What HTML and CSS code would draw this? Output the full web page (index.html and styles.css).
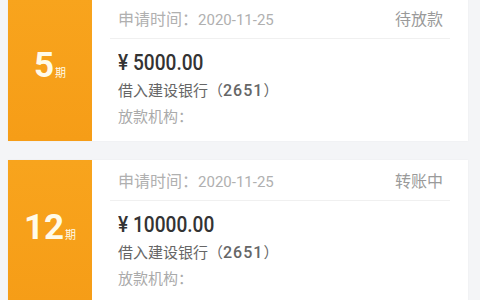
FILE: index.html
```html
<!DOCTYPE html>
<html lang="zh">
<head>
<meta charset="utf-8">
<link rel="stylesheet" href="styles.css">
</head>
<body>
<div class="list">
  <div class="card">
    <div class="term"><span class="num">5</span><span class="unit">期</span></div>
    <div class="info">
      <div class="head"><span class="date">申请时间：<span class="d">2020-11-25</span></span><span class="status">待放款</span></div>
      <div class="amount"><span class="amt">¥ 5000.00</span></div>
      <div class="bank">借入建设银行（<span class="bd">2651</span>）</div>
      <div class="org">放款机构：</div>
    </div>
  </div>
  <div class="card">
    <div class="term"><span class="num">12</span><span class="unit">期</span></div>
    <div class="info">
      <div class="head"><span class="date">申请时间：<span class="d">2020-11-25</span></span><span class="status">转账中</span></div>
      <div class="amount"><span class="amt">¥ 10000.00</span></div>
      <div class="bank">借入建设银行（<span class="bd">2651</span>）</div>
      <div class="org">放款机构：</div>
    </div>
  </div>
</div>
</body>
</html>
```
FILE: styles.css
```css
* { box-sizing: border-box; }
html, body { margin: 0; padding: 0; }
body {
  width: 480px;
  height: 300px;
  overflow: hidden;
  background: #f4f5f7;
  font-family: "Noto Sans CJK SC", "Noto Sans", sans-serif;
}
.list {
  display: flex;
  flex-direction: column;
  gap: 19px;
  padding: 0 12px 0 8px;
  margin-top: -2px;
}
.card {
  display: flex;
  height: 143px;
  background: #fff;
  box-shadow: 0 0 2px rgba(0,0,0,0.04);
  flex: none;
}
.term {
  width: 84px;
  flex: none;
  background: linear-gradient(#f8a41d, #f69d17);
  display: flex;
  align-items: baseline;
  justify-content: center;
  padding-top: 48px;
  color: #fffbe9;
}
.num {
  font-family: Roboto, "Liberation Sans", sans-serif;
  font-weight: 700;
  font-size: 35px;
  line-height: 40px;
}
.unit {
  font-size: 11px;
  margin-left: 1px;
}
.info {
  flex: 1;
  margin: 0 18px;
  display: flex;
  flex-direction: column;
}
.head {
  height: 41px;
  border-bottom: 1px solid #f0f0f0;
  display: flex;
  justify-content: space-between;
  align-items: center;
  padding: 0 7px 0 8px;
  font-size: 16px;
  color: #b0b0b0;
}
.d {
  font-family: Roboto, "Liberation Sans", sans-serif;
  font-size: 15px;
}
.status {
  color: #9a9a9a;
}
.amount {
  margin-top: 9px;
  padding-left: 8px;
  height: 28px;
  line-height: 28px;
  color: #333;
}
.amt {
  display: inline-block;
  font-family: Roboto, "Liberation Sans", sans-serif;
  font-weight: 500;
  font-size: 22.5px;
  transform: scaleX(0.85);
  transform-origin: left center;
}
.bank {
  margin-top: 3px;
  padding-left: 8px;
  height: 22px;
  line-height: 22px;
  font-size: 15px;
  color: #666;
}
.bd {
  font-family: Roboto, "Liberation Sans", sans-serif;
  font-weight: 500;
  font-size: 16px;
  letter-spacing: 1px;
}
.org {
  margin-top: 4px;
  padding-left: 8px;
  height: 22px;
  line-height: 22px;
  font-size: 15px;
  color: #aaa;
}
```
